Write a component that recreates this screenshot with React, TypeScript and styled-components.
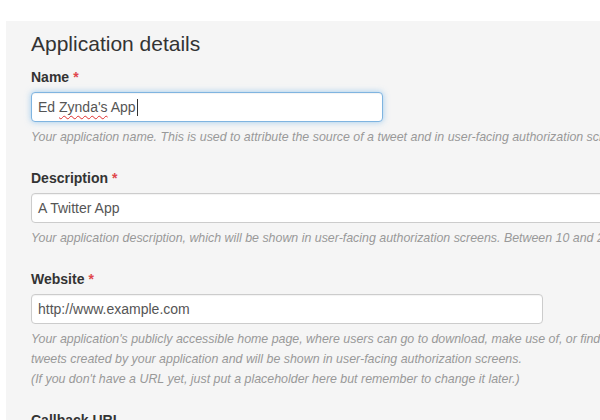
import styled, { createGlobalStyle } from 'styled-components'

const GlobalStyle = createGlobalStyle`
  html, body {
    margin: 0;
    padding: 0;
    background: #fff;
    overflow: hidden;
  }
  body {
    font-family: "Liberation Sans", Arial, sans-serif;
    color: #333;
  }
`;

const Panel = styled.div`
  margin: 21px 0 0 6px;
  width: 720px;
  min-height: 420px;
  background: #f5f5f5;
  padding: 11px 0 0 25px;
  box-sizing: border-box;
`;

const Title = styled.h3`
  margin: 0 0 12px;
  font-size: 21px;
  line-height: 23px;
  font-weight: normal;
  color: #333;
`;

const Group = styled.div`
  margin-bottom: 21px;
`;

const Label = styled.div`
  font-size: 14px;
  line-height: 20px;
  font-weight: bold;
  color: #333;
  margin-bottom: 5px;
`;

const Required = styled.span`
  color: #e0474c;
  margin-left: 4px;
`;

const Field = styled.div<{ $width: number; $focused?: boolean }>`
  width: ${p => p.$width}px;
  height: 30px;
  box-sizing: border-box;
  padding: 0 6px;
  display: flex;
  align-items: center;
  background: #fff;
  border: 1px solid ${p => (p.$focused ? '#7fb4e0' : '#ccc')};
  border-radius: 4px;
  box-shadow: ${p =>
    p.$focused
      ? 'inset 0 1px 1px rgba(0,0,0,.05), 0 0 6px rgba(102,175,233,.6)'
      : 'inset 0 1px 1px rgba(0,0,0,.05)'};
  font-size: 14px;
  color: #555;
  white-space: pre;
`;

const Misspelled = styled.span`
  text-decoration: underline wavy #e03030;
  text-decoration-thickness: 1px;
  text-underline-offset: 3px;
`;

const Caret = styled.span`
  display: inline-block;
  width: 1px;
  height: 17px;
  background: #333;
  margin-left: 1px;
`;

const Help = styled.div`
  margin-top: 5px;
  font-size: 12.4px;
  line-height: 20px;
  font-style: italic;
  color: #999;
  white-space: nowrap;
`;

export default function App(): JSX.Element {
  return (
    <>
      <GlobalStyle />
      <Panel>
        <Title>Application details</Title>

        <Group>
          <Label>Name<Required>*</Required></Label>
          <Field $width={352} $focused>
            Ed <Misspelled>Zynda's</Misspelled> App<Caret />
          </Field>
          <Help>
            Your application name. This is used to attribute the source of a tweet and in user-facing authorization screens. 32 characters max.
          </Help>
        </Group>

        <Group>
          <Label>Description<Required>*</Required></Label>
          <Field $width={680}>A Twitter App</Field>
          <Help>
            Your application description, which will be shown in user-facing authorization screens. Between 10 and 200 characters max.
          </Help>
        </Group>

        <Group>
          <Label>Website<Required>*</Required></Label>
          <Field $width={512}>http://www.example.com</Field>
          <Help>
            Your application's publicly accessible home page, where users can go to download, make use of, or find out more information about your application.
            <br />
            tweets created by your application and will be shown in user-facing authorization screens.
            <br />
            (If you don't have a URL yet, just put a placeholder here but remember to change it later.)
          </Help>
        </Group>

        <Group>
          <Label>Callback URL</Label>
        </Group>
      </Panel>
    </>
  );
}
